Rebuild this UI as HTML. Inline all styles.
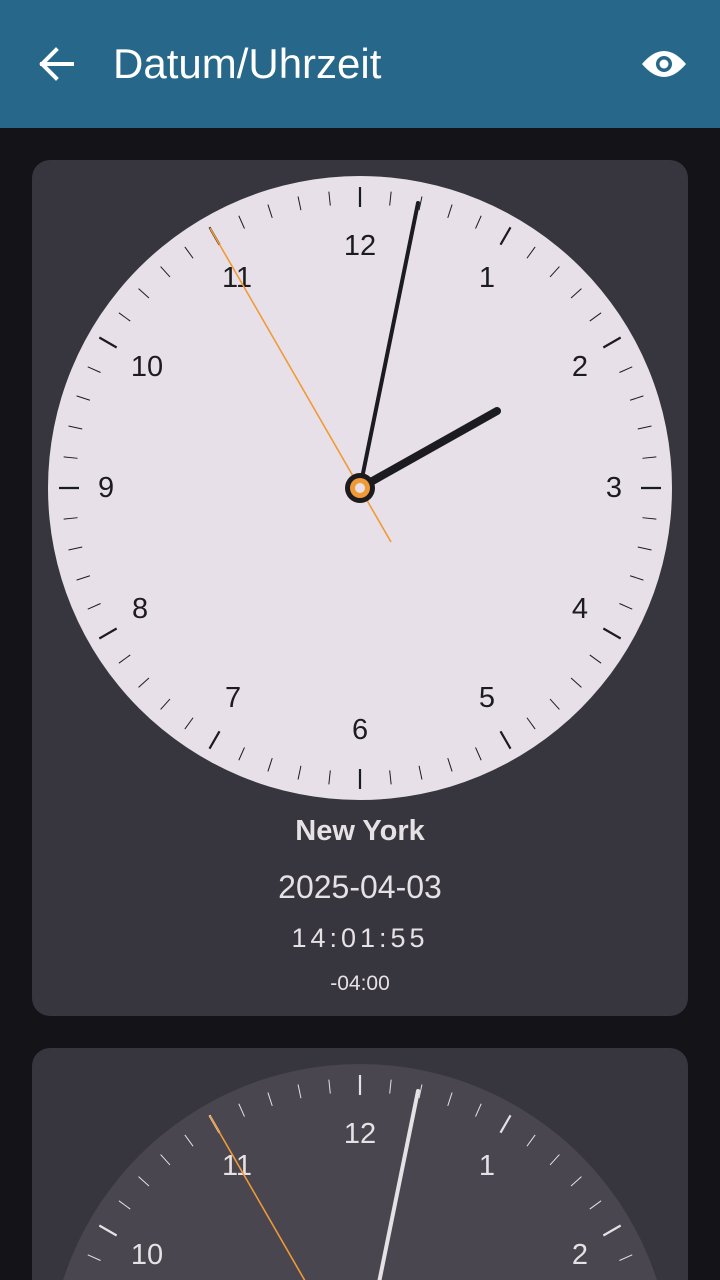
<!DOCTYPE html>
<html><head><meta charset="utf-8"><style>
html,body{margin:0;padding:0;width:720px;height:1280px;overflow:hidden;background:#141318;font-family:"Liberation Sans",Roboto,sans-serif}
.bar{position:absolute;left:0;top:0;width:720px;height:128px;background:#276789}
.title{position:absolute;left:113px;top:40px;font-size:42px;color:#fff}
.card{position:absolute;left:32px;width:656px;background:#37353d;border-radius:18px}
.t{position:absolute;left:0;width:656px;text-align:center;color:#e6e1e5}
svg{position:absolute;left:0;top:0}
</style></head><body>
<div class="bar">
<svg width="720" height="128"><path d="M72 64H42M56 50L42 64L56 78" stroke="#fff" stroke-width="4" fill="none" stroke-linecap="square"/>
<path d="M642 64Q664 38 686 64Q664 90 642 64Z" fill="#fff"/><circle cx="664" cy="64" r="8" fill="#276789"/><circle cx="664" cy="64" r="4.5" fill="#fff"/></svg>
<div class="title">Datum/Uhrzeit</div></div>

<div class="card" style="top:160px;height:856px">
<div class="t" style="top:655px;font-size:29px;font-weight:bold">New York</div>
<div class="t" style="top:709px;font-size:32px">2025-04-03</div>
<div class="t" style="top:763px;font-size:27px;letter-spacing:4px">14:01:55</div>
<div class="t" style="top:812px;font-size:21px">-04:00</div>
</div>
<div class="card" style="top:1048px;height:232px;border-bottom-left-radius:0;border-bottom-right-radius:0"></div>

<svg width="720" height="1280">
<defs>
<g id="ticks" stroke-linecap="butt">
<g stroke-width="1">
<line x1="0" y1="-298" x2="0" y2="-284" transform="rotate(6)"/><line x1="0" y1="-298" x2="0" y2="-284" transform="rotate(12)"/><line x1="0" y1="-298" x2="0" y2="-284" transform="rotate(18)"/><line x1="0" y1="-298" x2="0" y2="-284" transform="rotate(24)"/>
<line x1="0" y1="-298" x2="0" y2="-284" transform="rotate(36)"/><line x1="0" y1="-298" x2="0" y2="-284" transform="rotate(42)"/><line x1="0" y1="-298" x2="0" y2="-284" transform="rotate(48)"/><line x1="0" y1="-298" x2="0" y2="-284" transform="rotate(54)"/>
<line x1="0" y1="-298" x2="0" y2="-284" transform="rotate(66)"/><line x1="0" y1="-298" x2="0" y2="-284" transform="rotate(72)"/><line x1="0" y1="-298" x2="0" y2="-284" transform="rotate(78)"/><line x1="0" y1="-298" x2="0" y2="-284" transform="rotate(84)"/>
<line x1="0" y1="-298" x2="0" y2="-284" transform="rotate(96)"/><line x1="0" y1="-298" x2="0" y2="-284" transform="rotate(102)"/><line x1="0" y1="-298" x2="0" y2="-284" transform="rotate(108)"/><line x1="0" y1="-298" x2="0" y2="-284" transform="rotate(114)"/>
<line x1="0" y1="-298" x2="0" y2="-284" transform="rotate(126)"/><line x1="0" y1="-298" x2="0" y2="-284" transform="rotate(132)"/><line x1="0" y1="-298" x2="0" y2="-284" transform="rotate(138)"/><line x1="0" y1="-298" x2="0" y2="-284" transform="rotate(144)"/>
<line x1="0" y1="-298" x2="0" y2="-284" transform="rotate(156)"/><line x1="0" y1="-298" x2="0" y2="-284" transform="rotate(162)"/><line x1="0" y1="-298" x2="0" y2="-284" transform="rotate(168)"/><line x1="0" y1="-298" x2="0" y2="-284" transform="rotate(174)"/>
<line x1="0" y1="-298" x2="0" y2="-284" transform="rotate(186)"/><line x1="0" y1="-298" x2="0" y2="-284" transform="rotate(192)"/><line x1="0" y1="-298" x2="0" y2="-284" transform="rotate(198)"/><line x1="0" y1="-298" x2="0" y2="-284" transform="rotate(204)"/>
<line x1="0" y1="-298" x2="0" y2="-284" transform="rotate(216)"/><line x1="0" y1="-298" x2="0" y2="-284" transform="rotate(222)"/><line x1="0" y1="-298" x2="0" y2="-284" transform="rotate(228)"/><line x1="0" y1="-298" x2="0" y2="-284" transform="rotate(234)"/>
<line x1="0" y1="-298" x2="0" y2="-284" transform="rotate(246)"/><line x1="0" y1="-298" x2="0" y2="-284" transform="rotate(252)"/><line x1="0" y1="-298" x2="0" y2="-284" transform="rotate(258)"/><line x1="0" y1="-298" x2="0" y2="-284" transform="rotate(264)"/>
<line x1="0" y1="-298" x2="0" y2="-284" transform="rotate(276)"/><line x1="0" y1="-298" x2="0" y2="-284" transform="rotate(282)"/><line x1="0" y1="-298" x2="0" y2="-284" transform="rotate(288)"/><line x1="0" y1="-298" x2="0" y2="-284" transform="rotate(294)"/>
<line x1="0" y1="-298" x2="0" y2="-284" transform="rotate(306)"/><line x1="0" y1="-298" x2="0" y2="-284" transform="rotate(312)"/><line x1="0" y1="-298" x2="0" y2="-284" transform="rotate(318)"/><line x1="0" y1="-298" x2="0" y2="-284" transform="rotate(324)"/>
<line x1="0" y1="-298" x2="0" y2="-284" transform="rotate(336)"/><line x1="0" y1="-298" x2="0" y2="-284" transform="rotate(342)"/><line x1="0" y1="-298" x2="0" y2="-284" transform="rotate(348)"/><line x1="0" y1="-298" x2="0" y2="-284" transform="rotate(354)"/>
</g>
<g stroke-width="2.2">
<line x1="0" y1="-301" x2="0" y2="-281"/><line x1="0" y1="-301" x2="0" y2="-281" transform="rotate(30)"/><line x1="0" y1="-301" x2="0" y2="-281" transform="rotate(60)"/><line x1="0" y1="-301" x2="0" y2="-281" transform="rotate(90)"/>
<line x1="0" y1="-301" x2="0" y2="-281" transform="rotate(120)"/><line x1="0" y1="-301" x2="0" y2="-281" transform="rotate(150)"/><line x1="0" y1="-301" x2="0" y2="-281" transform="rotate(180)"/><line x1="0" y1="-301" x2="0" y2="-281" transform="rotate(210)"/>
<line x1="0" y1="-301" x2="0" y2="-281" transform="rotate(240)"/><line x1="0" y1="-301" x2="0" y2="-281" transform="rotate(270)"/><line x1="0" y1="-301" x2="0" y2="-281" transform="rotate(300)"/><line x1="0" y1="-301" x2="0" y2="-281" transform="rotate(330)"/>
</g>
</g>
<g id="nums" font-family="Liberation Sans, Roboto, sans-serif" font-size="29" text-anchor="middle" dominant-baseline="central" stroke="none">
<text x="0" y="-242">12</text><text x="127" y="-210">1</text><text x="220" y="-121">2</text><text x="254" y="0">3</text>
<text x="220" y="121">4</text><text x="127" y="210">5</text><text x="0" y="242">6</text><text x="-127" y="210">7</text>
<text x="-220" y="121">8</text><text x="-254" y="0">9</text><text x="-213" y="-121">10</text><text x="-123" y="-210">11</text>
</g>
</defs>
<g transform="translate(360,488)">
<circle r="312" fill="#e7e0e8"/>
<use href="#ticks" stroke="#1c1b1f"/>
<use href="#nums" fill="#1c1b1f"/>
<line x1="0" y1="0" x2="137" y2="-77" stroke="#1c1b1f" stroke-width="8" stroke-linecap="round"/>
<line x1="0" y1="0" x2="58" y2="-285" stroke="#1c1b1f" stroke-width="4" stroke-linecap="round"/>
<line x1="31" y1="54" x2="-150" y2="-260" stroke="#f09a37" stroke-width="1.6"/>
<circle r="15" fill="#1c1b1f"/><circle r="10" fill="#f09a37"/><circle r="5" fill="#e7e0e8"/>
</g>
<g transform="translate(360,1376)">
<circle r="312" fill="#49464f"/>
<use href="#ticks" stroke="#e6e1e5"/>
<use href="#nums" fill="#e6e1e5"/>
<line x1="0" y1="0" x2="58" y2="-285" stroke="#e6e1e5" stroke-width="4" stroke-linecap="round"/>
<line x1="31" y1="54" x2="-150" y2="-260" stroke="#f09a37" stroke-width="1.6"/>
</g>
</svg>
</body></html>
